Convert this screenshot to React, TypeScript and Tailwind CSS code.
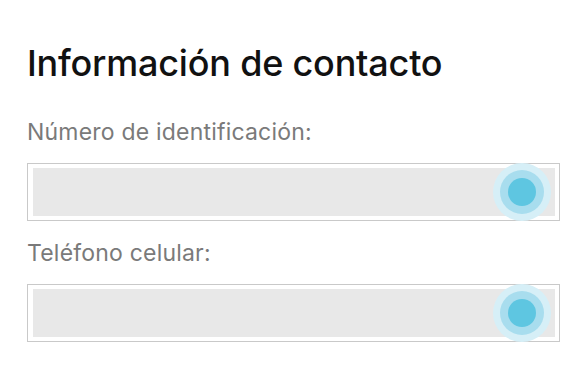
import React from "react";

function Field({ label }: { label: string }) {
  return (
    <div className="flex flex-col">
      <div className="text-[23px] leading-[28px] text-[#7a7a7a] tracking-[0.2px]">{label}</div>
      <div className="mt-[17px] relative h-[58px] border border-[#c9c9c9] bg-white p-[4px] pl-[5px]">
        <div className="h-full w-full bg-[#e8e8e8]" />
        <div className="absolute right-[8px] top-1/2 -translate-y-1/2 w-[58px] h-[58px] rounded-full bg-[#d6eff7] flex items-center justify-center blur-[0.6px]">
          <div className="w-[44px] h-[44px] rounded-full bg-[#a8ddee] flex items-center justify-center">
            <div className="w-[28px] h-[28px] rounded-full bg-[#5ec6e1]" />
          </div>
        </div>
      </div>
    </div>
  );
}

export default function App() {
  return (
    <div
      className="w-[587px] h-[380px] bg-white pl-[27px] pr-[27px] pt-[41px]"
      style={{ fontFamily: "Inter, 'Noto Sans', sans-serif" }}
    >
      <h1 className="text-[36px] leading-[44px] font-medium text-[#111] tracking-[-0.2px]">
        Información de contacto
      </h1>
      <div className="mt-[33px] flex flex-col gap-[18px]">
        <Field label="Número de identificación:" />
        <Field label="Teléfono celular:" />
      </div>
    </div>
  );
}
